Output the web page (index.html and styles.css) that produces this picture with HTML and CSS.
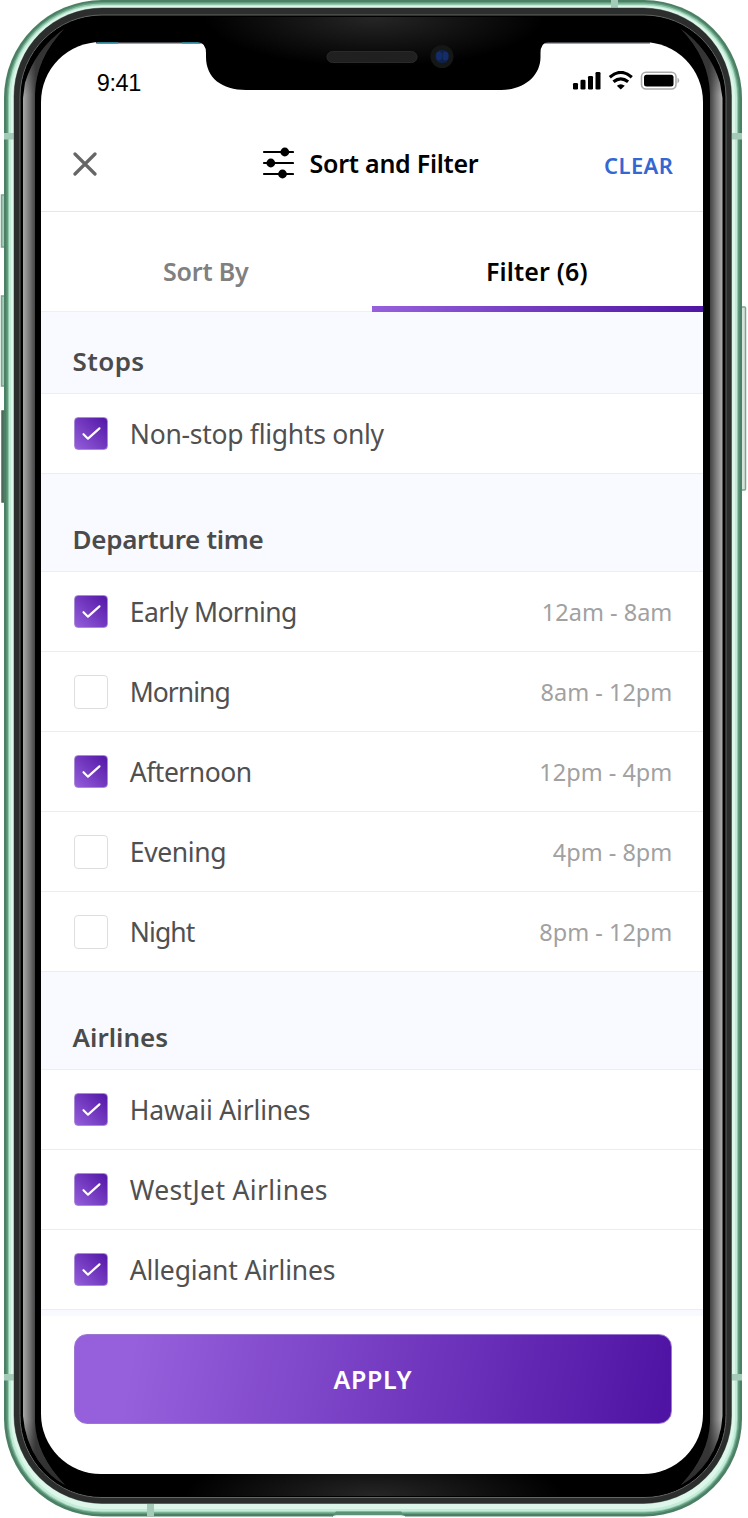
FILE: index.html
```html
<!DOCTYPE html>
<html lang="en">
<head>
<meta charset="utf-8">
<title>Sort and Filter</title>
<link rel="stylesheet" href="styles.css">
</head>
<body>
<svg width="0" height="0" class="defs" aria-hidden="true">
  <symbol id="check" viewBox="0 0 34 33"><path d="M9 17.300 13.800 22 26 11" fill="none" stroke="#fff" stroke-width="2.300" stroke-linecap="round" stroke-linejoin="round"/></symbol>
</svg>
<div class="phone">
  <svg class="frame" viewBox="0 0 748 1518" aria-hidden="true">
    <defs>
      <linearGradient id="gl" gradientUnits="userSpaceOnUse" x1="23" y1="0" x2="36" y2="0"><stop offset="0" stop-color="#a8a8a8"/><stop offset=".5" stop-color="#777"/><stop offset="1" stop-color="#3a3a3a"/></linearGradient>
      <linearGradient id="gr" gradientUnits="userSpaceOnUse" x1="709" y1="0" x2="722.500" y2="0"><stop offset="0" stop-color="#3a3a3a"/><stop offset=".5" stop-color="#777"/><stop offset="1" stop-color="#b0b0b0"/></linearGradient>
      <linearGradient id="tipfade" x1="0" y1="0" x2="0" y2="1"><stop offset="0" stop-color="#2c2c2c"/><stop offset=".02" stop-color="#333" stop-opacity=".7"/><stop offset=".045" stop-color="#333" stop-opacity="0"/><stop offset=".955" stop-color="#333" stop-opacity="0"/><stop offset=".98" stop-color="#333" stop-opacity=".7"/><stop offset="1" stop-color="#2c2c2c"/></linearGradient>
      <radialGradient id="shine" cx="0" cy="0" r="1" gradientUnits="userSpaceOnUse" gradientTransform="translate(374 17) scale(170 50)"><stop offset="0" stop-color="#262626"/><stop offset="1" stop-color="#000"/></radialGradient>
      <radialGradient id="shinelow" cx="0" cy="0" r="1" gradientUnits="userSpaceOnUse" gradientTransform="translate(374 1496) scale(190 45)"><stop offset="0" stop-color="#262626"/><stop offset="1" stop-color="#000"/></radialGradient>
    </defs>
    <g stroke="#78a78e" stroke-width="1.500">
      <rect x="1.500" y="195" width="5" height="52" fill="#a6cdb8"/>
      <rect x="1.500" y="296" width="5" height="90" fill="#a6cdb8"/>
      <rect x="2" y="411" width="4" height="91" fill="#52735f" stroke="#496957"/>
      <rect x="739" y="307" width="6.500" height="183" rx="1" fill="#d7e2dc"/>
    </g>
    <rect x="4" y="0" width="738" height="1516.500" rx="98" fill="#4c8065"/>
    <rect x="6.500" y="2" width="733" height="1512" rx="96" fill="#649c80"/>
    <rect x="8" y="3.500" width="730" height="1509" rx="94" fill="#92c9ad"/>
    <rect x="9" y="5" width="728" height="1506.500" rx="93" fill="#c2ecd8"/>
    <rect x="11" y="6" width="724" height="1503" rx="91" fill="#dcf6e9"/>
    <g fill="#a4cbb8"><rect x="4" y="133" width="10" height="6.500"/><rect x="732" y="133" width="10" height="6.500"/><rect x="4" y="1374" width="10" height="6.500"/><rect x="732" y="1374" width="10" height="6.500"/><rect x="611" y="0" width="7" height="8"/><rect x="147" y="1504" width="7" height="12"/></g>
    <rect x="13.500" y="7.500" width="718.500" height="1496.500" rx="89" fill="#8a9690"/>
    <rect x="14" y="8" width="717.500" height="1495.500" rx="88" fill="#2c2e2d"/>
    <rect x="20" y="15" width="706" height="1482.500" rx="82" fill="#000" stroke="#626664" stroke-width="1"/>
    <rect x="21" y="16" width="704" height="1480.500" rx="80" fill="#000"/>
    <path d="M120 17H628V44H120Z" fill="url(#shine)"/>
    <path d="M120 1473H628V1496H120Z" fill="url(#shinelow)"/>
    <path d="M64 29Q35 50 25 83L23 98V1416Q25 1440 38 1460Q50 1477 65 1485Q36 1455 35 1422V94Q36 58 64 29Z" fill="url(#gl)"/>
    <path d="M681 29Q710 50 720 83L722.500 98V1416Q721 1440 708 1460Q696 1477 681 1485Q709 1455 710 1422V94Q709 58 681 29Z" fill="url(#gr)"/>
    <path d="M64 29Q35 50 25 83L23 98V1416Q25 1440 38 1460Q50 1477 65 1485Q36 1455 35 1422V94Q36 58 64 29ZM681 29Q710 50 720 83L722.500 98V1416Q721 1440 708 1460Q696 1477 681 1485Q709 1455 710 1422V94Q709 58 681 29Z" fill="url(#tipfade)"/>
    <path d="M332 1516.800 336 1511.500H401L405 1516.800Z" fill="#5b9276"/><path d="M333 1518V1516L336 1515.300H401L405 1516V1518Z" fill="#fff"/>
  </svg>
  <main class="screen">
    <div class="status">
      <span class="time">9:41</span>
      <svg class="signals" width="110" height="22" viewBox="0 0 110 22" aria-hidden="true">
        <rect x="3" y="12" width="5" height="6.500" rx="1.300"/><rect x="10.500" y="8.800" width="5" height="9.700" rx="1.300"/><rect x="18" y="5" width="5" height="13.500" rx="1.300"/><rect x="25.500" y="1" width="5" height="17.500" rx="1.300"/>
        <path d="M39.800 6.200Q50.800-3.300 61.800 6.200M43.500 10.800Q50.800 4.800 58.100 10.800" fill="none" stroke="#000" stroke-width="3.200"/><path d="M46.800 14.800Q50.800 11.600 54.800 14.800L50.800 18.500Z"/>
        <rect x="71.500" y="1.300" width="34.500" height="16.700" rx="4.500" fill="none" stroke="#aaa" stroke-width="1.600"/><rect x="74" y="3.800" width="29.500" height="11.700" rx="2.500"/><path d="M107.500 6.500Q111 9.500 107.500 12.500Z" fill="#aaa"/>
      </svg>
    </div>
    <header class="header">
      <svg class="close" width="24" height="24" viewBox="0 0 24 24"><path d="M2 2 22 22M22 2 2 22" stroke="#666" stroke-width="3.200" stroke-linecap="round"/></svg>
      <h1 class="title"><svg width="32" height="32" viewBox="0 0 32 32"><path d="M2 5H31M2 16H31M2 27H31" stroke="#000" stroke-width="2.200" stroke-linecap="round"/><circle cx="22.800" cy="5" r="4.400"/><circle cx="8.800" cy="16" r="4.400"/><circle cx="20.500" cy="27" r="4.400"/></svg><span>Sort and Filter</span></h1>
      <a class="clear">CLEAR</a>
    </header>
    <nav class="tabs"><div class="tab">Sort By</div><div class="tab active">Filter (6)</div></nav>
    <section>
      <h2 class="heading first">Stops</h2>
      <div class="row"><i class="box on"><svg><use href="#check"/></svg></i><span class="label">Non-stop flights only</span></div>
    </section>
    <section>
      <h2 class="heading tight">Departure time</h2>
      <div class="row"><i class="box on"><svg><use href="#check"/></svg></i><span class="label early">Early Morning</span><span class="hours">12am - 8am</span></div>
      <div class="row"><i class="box"></i><span class="label morning">Morning</span><span class="hours">8am - 12pm</span></div>
      <div class="row"><i class="box on"><svg><use href="#check"/></svg></i><span class="label afternoon">Afternoon</span><span class="hours">12pm - 4pm</span></div>
      <div class="row"><i class="box"></i><span class="label evening">Evening</span><span class="hours">4pm - 8pm</span></div>
      <div class="row"><i class="box"></i><span class="label night">Night</span><span class="hours">8pm - 12pm</span></div>
    </section>
    <section>
      <h2 class="heading">Airlines</h2>
      <div class="row"><i class="box on"><svg><use href="#check"/></svg></i><span class="label airline">Hawaii Airlines</span></div>
      <div class="row"><i class="box on"><svg><use href="#check"/></svg></i><span class="label westjet">WestJet Airlines</span></div>
      <div class="row"><i class="box on"><svg><use href="#check"/></svg></i><span class="label airline">Allegiant Airlines</span></div>
    </section>
    <div class="gap"></div>
    <footer class="footer"><button class="apply">APPLY</button></footer>
  </main>
  <svg class="notch" viewBox="0 0 748 100" aria-hidden="true">
    <path d="M96 42.800H650" stroke="#44474c" stroke-width="1.500"/><path d="M97 42.800H118M182 42.800H200" stroke="#2e7f92" stroke-width="1.500"/>
    <path d="M198 42Q206 43 206 53V57C206 78 222 90 246 90H501C524 90 540.500 76 540.500 57V53Q540.500 43 548 42V40H198Z" fill="url(#shine)"/>
    <rect x="327" y="51.500" width="90" height="11" rx="5.500" fill="#202020" stroke="#2a2a2a"/>
    <circle cx="442" cy="56.500" r="11.500" fill="#151717"/><circle cx="442" cy="56.500" r="6.800" fill="#0f2147"/><ellipse cx="439" cy="56" rx="3" ry="4.500" fill="#142c68"/><ellipse cx="445.500" cy="56" rx="3" ry="4.500" fill="#142c68"/>
  </svg>
</div>
</body>
</html>
```

FILE: styles.css
```css
* { box-sizing: border-box; }
body { margin: 0; background: #fff; font-family: "Noto Sans", sans-serif; }
.defs { position: absolute; }
.phone { position: relative; width: 748px; height: 1518px; padding: 42px 44.500px 44px 41.300px; overflow: hidden; }
.frame, .notch { position: absolute; left: 0; top: 0; width: 748px; }
.screen { position: relative; width: 662px; height: 1432px; background: #fff; border-radius: 60px; overflow: hidden; }
.status { height: 74px; display: flex; justify-content: space-between; align-items: flex-start; padding: 27px 23.500px 0 55.500px; }
.time { font: 23.500px/28px "Liberation Sans", sans-serif; letter-spacing: -.4px; }
.signals { margin-top: 2px; }
.header { height: 96px; border-bottom: 1px solid #e6e6e6; display: grid; grid-template-columns: 100px 1fr 100px; align-items: center; padding: 0 30px 1px 31.500px; }
.close { margin-top: 1px; }
.title { margin: 0; display: flex; align-items: center; justify-content: center; gap: 16px; font-size: 25px; line-height: 32px; font-weight: 600; letter-spacing: -.25px; padding-right: 6px; }
.clear { justify-self: end; font-size: 22px; font-weight: 600; color: #3467d1; margin-top: 3px; letter-spacing: .4px; }
.tabs { height: 100px; display: grid; grid-template-columns: 1fr 1fr; border-bottom: 1px solid #eeeff4; }
.tab { height: 100px; display: flex; align-items: center; justify-content: center; font-size: 25px; font-weight: 600; color: #808080; padding: 18px 2px 0 0; letter-spacing: -.2px; }
.tab.active { color: #000; padding-top: 24px; letter-spacing: .15px; border-bottom: 6px solid; border-image: linear-gradient(90deg, #9660dc, #5014a4) 1; }
.heading { margin: 0; height: 98px; padding: 31px 31.300px 0; background: #f9faff; border-bottom: 1px solid #eceef3; color: #4b4b4b; font-size: 26px; line-height: 68px; font-weight: 600; }
.heading.first { height: 82px; padding-top: 15px; letter-spacing: .4px; }
.heading.tight { letter-spacing: -.3px; }
.row { height: 80px; border-bottom: 1px solid #ebedf2; display: flex; align-items: center; padding: 0 31px 0 33px; }
.box { width: 34px; height: 34px; border: 1.500px solid #dedede; border-radius: 4px; margin-right: 21.500px; }
.box.on { border: 1px solid #a98bd6; height: 33px; background: linear-gradient(45deg, #9660dc, #5014a4) border-box; }
.box svg { display: block; width: 32px; height: 31px; }
.label { color: #505050; font-size: 26.500px; line-height: 36px; letter-spacing: -.28px; }
.label.early { letter-spacing: -.6px; }
.label.morning { letter-spacing: -1px; }
.label.afternoon { letter-spacing: -.5px; }
.label.evening { letter-spacing: -.4px; }
.label.night { letter-spacing: -.9px; }
.label.airline { letter-spacing: -.18px; }
.label.westjet { letter-spacing: .35px; }
.hours { margin-left: auto; color: #a1a1a1; font-size: 23.500px; padding-top: 1px; }
.gap { height: 6px; background: #f9faff; }
.footer { padding: 18px 32px 0 32.500px; }
.apply { display: block; width: 598px; height: 90px; padding: 0; border: 1px solid #9a78cf; border-radius: 13px; background: linear-gradient(100deg, #9660dc 10%, #5014a4 98%) border-box; color: #fff; font: 600 25px "Noto Sans", sans-serif; letter-spacing: .6px; }
```
